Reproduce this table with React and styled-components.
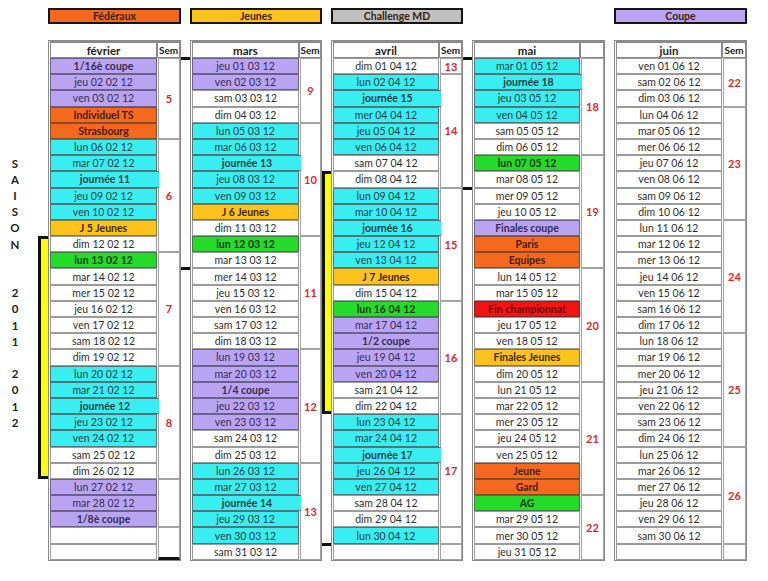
import styled, { createGlobalStyle } from 'styled-components'

const ROW = 16.2
const ROWS = `17px repeat(31, ${ROW}px)`

const FILL = {
  w: '#ffffff', e: '#ffffff', c: '#38eef0', p: '#b9a4f1', o: '#f4691e',
  y: '#fdc31c', g: '#25db2a', r: '#f01414',
}
const INK = {
  w: '#2e2e2e', e: '#2e2e2e', c: '#1f4048', p: '#362c5a', o: '#4a1d00',
  y: '#3d2800', g: '#103810', r: '#6e0606',
}
const EDGE = {
  w: '#9b9b9b', e: '#9b9b9b', c: '#4f7479', p: '#6b5f8c', o: '#8b4a22',
  y: '#8f7a2a', g: '#3f7a40', r: '#8a2020',
}

const DAYS = ['dim', 'lun', 'mar', 'mer', 'jeu', 'ven', 'sam']

// une colonne par mois : couleurs des lignes, libellés spéciaux et semaines
const months = [
  {
    name: 'février', m: 1, sem: 23, semHead: 'Sem', col: 3,
    kinds: 'pppoocccccywgwwwwwwcccccwwpppee',
    labels: { 1: '1/16è coupe', 4: 'Individuel TS', 5: 'Strasbourg', 8: 'journée 11', 11: 'J 5 Jeunes', 22: 'journée 12', 29: '1/8è coupe' },
    weeks: [[1, 5, '5'], [6, 12, '6'], [13, 19, '7'], [20, 26, '8'], [27, 29], [30, 31, null, true]],
  },
  {
    name: 'mars', m: 2, sem: 22, semHead: 'Sem', col: 5,
    kinds: 'ppwwcccccywgwwwwwwpppppwwcccccw',
    labels: { 7: 'journée 13', 10: 'J 6 Jeunes', 21: '1/4 coupe', 28: 'journée 14' },
    weeks: [[1, 4, '9'], [5, 11, '10'], [12, 18, '11'], [19, 25, '12'], [26, 31, '13']],
  },
  {
    name: 'avril', m: 3, sem: 23, semHead: 'Sem', col: 7,
    kinds: 'wcccccwwcccccywgppppwwcccccwwce',
    labels: { 3: 'journée 15', 11: 'journée 16', 14: 'J 7 Jeunes', 18: '1/2 coupe', 25: 'journée 17' },
    weeks: [[1, 1, '13'], [2, 8, '14'], [9, 15, '15'], [16, 22, '16'], [23, 29, '17'], [30, 30], [31, 31]],
  },
  {
    name: 'mai', m: 4, sem: 24, semHead: '', col: 9,
    kinds: 'ccccwwgwwwpoowwrwwywwwwwwoogwww',
    labels: { 2: 'journée 18', 11: 'Finales coupe', 12: 'Paris', 13: 'Equipes', 16: 'Fin championnat', 19: 'Finales Jeunes', 26: 'Jeune', 27: 'Gard', 28: 'AG' },
    weeks: [[1, 6, '18'], [7, 13, '19'], [14, 20, '20'], [21, 27, '21'], [28, 31, '22']],
  },
  {
    name: 'juin', m: 5, sem: 24, semHead: 'Sem', col: 11,
    kinds: 'w'.repeat(30) + 'e',
    labels: {},
    weeks: [[1, 3, '22'], [4, 10, '23'], [11, 17, '24'], [18, 24, '25'], [25, 30, '26'], [31, 31]],
  },
]

const legend = [
  { text: 'Fédéraux', col: 3, bg: '#f4691e' },
  { text: 'Jeunes', col: 5, bg: '#fdc31c' },
  { text: 'Challenge MD', col: 7, bg: '#c0c0c0' },
  { text: 'Coupe', col: 11, bg: '#b9a4f1' },
]

const saison = { 7: 'S', 8: 'A', 9: 'I', 10: 'S', 11: 'O', 12: 'N', 15: '2', 16: '0', 17: '1', 18: '1', 20: '2', 21: '0', 22: '1', 23: '2' }

const gutters = [
  { col: 2, bracket: [12, 26], ticks: [] },
  { col: 4, ticks: [1, 14] },
  { col: 6, bracket: [8, 22], ticks: [31] },
  { col: 8, ticks: [1, 9] },
]

const GlobalStyle = createGlobalStyle`
  body {
    margin: 0;
    background: #fff;
    font-family: Lato, "Liberation Sans", sans-serif;
  }
`

const Page = styled.div`
  display: grid;
  grid-template-columns: 38px 10px 133px 9px 132px 9px 132px 9px 133px 9px 133px;
  grid-template-rows: 16px auto;
  row-gap: 16px;
  padding-top: 8px;
`

const Legend = styled.div`
  grid-column: ${p => p.col};
  grid-row: 1;
  background: ${p => p.bg};
  border: 2px solid #151515;
  display: flex;
  align-items: center;
  justify-content: center;
  font-size: 10.5px;
  font-weight: 700;
  color: #3a2410;
`

const Side = styled.div`
  grid-column: ${p => p.col};
  grid-row: 2;
  display: grid;
  grid-template-rows: ${ROWS};
  padding-top: 1px;
`

const Letter = styled.div`
  grid-row: ${p => p.row + 1};
  width: 30px;
  display: flex;
  align-items: center;
  justify-content: center;
  font-size: 11.5px;
  font-weight: 700;
  color: #222;
`

const Bracket = styled.div`
  grid-row: ${p => p.from + 1} / ${p => p.to + 2};
  grid-column: 1;
  background: #ffff00;
  border: 3px solid #111;
  border-right: 0;
`

const Tick = styled.div`
  grid-row: ${p => p.row + 1};
  grid-column: 1;
  align-self: start;
  height: 3px;
  margin-top: -1px;
  background: #111;
`

const Month = styled.div`
  grid-column: ${p => p.col};
  grid-row: 2;
  display: grid;
  grid-template-columns: 1fr ${p => p.sem}px;
  grid-template-rows: ${ROWS};
  border: 1px solid #8a8a8a;
  padding: 0 0 0 1px;
  background: #fff;
`

const Head = styled.div`
  grid-row: 1;
  grid-column: ${p => p.col};
  border: 1px solid #8a8a8a;
  border-top-width: 2px;
  display: flex;
  align-items: center;
  justify-content: center;
  font-size: ${p => (p.col === 1 ? 11.5 : 10)}px;
  font-weight: 700;
  color: #222;
`

const Day = styled.div`
  grid-row: ${p => p.row + 1};
  grid-column: 1;
  position: relative;
  z-index: 1;
  background: ${p => FILL[p.kind]};
  border: 1px solid ${p => EDGE[p.kind]};
  border-right-width: ${p => (p.wide ? 0 : 1)}px;
  margin-right: ${p => (p.wide ? -2 : 0)}px;
  display: flex;
  align-items: center;
  justify-content: center;
  font-size: 10.5px;
  font-weight: ${p => (p.bold ? 700 : 400)};
  color: ${p => INK[p.kind]};
  white-space: nowrap;
  overflow: hidden;
`

const Week = styled.div`
  grid-row: ${p => p.from + 1} / ${p => p.to + 2};
  grid-column: 2;
  margin-left: 1px;
  border: 1px solid #a3a3a3;
  border-bottom: ${p => (p.closed ? '3px solid #111' : '1px solid #a3a3a3')};
  display: flex;
  align-items: center;
  justify-content: center;
  font-size: 11px;
  font-weight: 700;
  color: #e0282a;
`

const dateText = (m, d) => {
  const dt = new Date(2012, m, d)
  const dd = String(d).padStart(2, '0')
  const mm = String(m + 1).padStart(2, '0')
  return `${DAYS[dt.getDay()]} ${dd} ${mm} 12`
}

const MonthTable = ({ month }) => (
  <Month col={month.col} sem={month.sem}>
    <Head col={1}>{month.name}</Head>
    <Head col={2}>{month.semHead}</Head>
    {month.weeks.map(([from, to, label, closed]) => (
      <Week key={from} from={from} to={to} closed={closed}>{label}</Week>
    ))}
    {month.kinds.split('').map((kind, i) => {
      const row = i + 1
      const label = month.labels[row]
      const text = kind === 'e' ? '' : label || dateText(month.m, row)
      return (
        <Day
          key={row}
          row={row}
          kind={kind}
          bold={!!label || kind === 'g'}
          wide={!!label && label.startsWith('journée')}
        >
          {text}
        </Day>
      )
    })}
  </Month>
)

export default function App() {
  return (
    <>
      <GlobalStyle />
      <Page>
        {legend.map(l => (
          <Legend key={l.text} col={l.col} bg={l.bg}>{l.text}</Legend>
        ))}
        <Side col={1}>
          {Object.entries(saison).map(([row, ch]) => (
            <Letter key={row} row={Number(row)}>{ch}</Letter>
          ))}
        </Side>
        {gutters.map(g => (
          <Side key={g.col} col={g.col}>
            {g.bracket && <Bracket from={g.bracket[0]} to={g.bracket[1]} />}
            {g.ticks.map(t => <Tick key={t} row={t} />)}
          </Side>
        ))}
        {months.map(m => <MonthTable key={m.name} month={m} />)}
      </Page>
    </>
  )
}
